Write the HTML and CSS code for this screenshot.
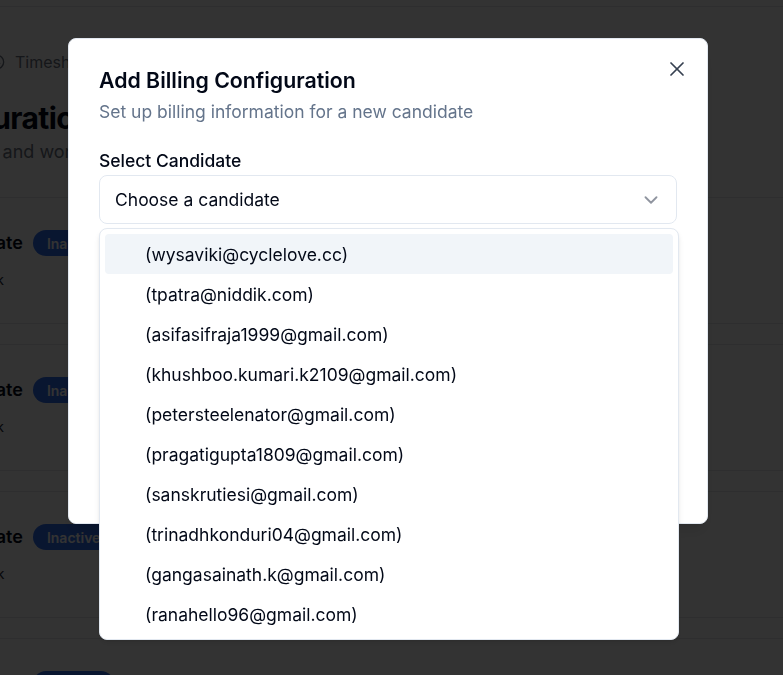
FILE: index.html
```html
<!DOCTYPE html>
<html lang="en">
<head>
<meta charset="utf-8">
<title>Billing Configuration</title>
<link rel="stylesheet" href="styles.css">
</head>
<body>
<div class="page">
  <div class="topbar"></div>
  <div class="content">
    <div class="crumb">
      <svg viewBox="0 0 24 24" fill="none" stroke="currentColor" stroke-width="2" stroke-linecap="round" stroke-linejoin="round"><circle cx="12" cy="12" r="10"/><path d="M12 6v6l4 2"/></svg>
      <span>Timesheets</span>
    </div>
    <h1 class="page-title">Billing Configuration</h1>
    <p class="lead">Manage billing rates and working hours</p>
    <div class="cards">
      <div class="card">
        <div class="card-head"><span class="card-title">Standard Billing Rate</span><span class="badge">Inactive</span></div>
        <div class="card-meta">$45.00/hr · 40 hrs/week</div>
      </div>
      <div class="card">
        <div class="card-head"><span class="card-title">Standard Billing Rate</span><span class="badge">Inactive</span></div>
        <div class="card-meta">$50.00/hr · 40 hrs/week</div>
      </div>
      <div class="card">
        <div class="card-head"><span class="card-title">Standard Billing Rate</span><span class="badge">Inactive</span></div>
        <div class="card-meta">$40.00/hr · 40 hrs/week</div>
      </div>
      <div class="card">
        <div class="card-head"><span class="card-title">Standard Billing Rate</span><span class="badge">Inactive</span></div>
        <div class="card-meta">$42.00/hr · 40 hrs/week</div>
      </div>
    </div>
  </div>
</div>

<div class="overlay"></div>

<div class="dialog" role="dialog">
  <h2 class="dialog-title">Add Billing Configuration</h2>
  <p class="dialog-desc">Set up billing information for a new candidate</p>
  <div class="field">
    <label class="label">Select Candidate</label>
    <div class="select">
      <span>Choose a candidate</span>
      <svg class="chevron" viewBox="0 0 24 24" fill="none" stroke="currentColor" stroke-width="2" stroke-linecap="round" stroke-linejoin="round"><path d="m6 9 6 6 6-6"/></svg>
    </div>
  </div>
  <div class="field">
    <label class="label">Hourly Rate</label>
    <div class="input">0.00</div>
  </div>
  <div class="field">
    <label class="label">Weekly Hours</label>
    <div class="input">40</div>
  </div>
  <div class="footer">
    <span class="btn btn-outline">Cancel</span>
    <span class="btn btn-primary">Create Configuration</span>
  </div>
  <svg class="close" viewBox="0 0 24 24" fill="none" stroke="currentColor" stroke-width="1.75" stroke-linecap="round" stroke-linejoin="round"><path d="M18 6 6 18"/><path d="m6 6 12 12"/></svg>
</div>

<div class="listbox" role="listbox">
  <div class="option active">(wysaviki@cyclelove.cc)</div>
  <div class="option">(tpatra@niddik.com)</div>
  <div class="option">(asifasifraja1999@gmail.com)</div>
  <div class="option">(khushboo.kumari.k2109@gmail.com)</div>
  <div class="option">(petersteelenator@gmail.com)</div>
  <div class="option">(pragatigupta1809@gmail.com)</div>
  <div class="option">(sanskrutiesi@gmail.com)</div>
  <div class="option">(trinadhkonduri04@gmail.com)</div>
  <div class="option">(gangasainath.k@gmail.com)</div>
  <div class="option">(ranahello96@gmail.com)</div>
</div>
</body>
</html>
```

FILE: styles.css
```css
* { box-sizing: border-box; }
html, body { margin: 0; height: 100%; }
body {
  font-family: Inter, "Noto Sans", sans-serif;
  background: #ffffff;
  color: #020817;
  overflow: hidden;
}

/* background page */
.page { width: 100%; }
.topbar { height: 7px; border-bottom: 1px solid #e5e7eb; }
.content { margin-left: -195px; width: 1200px; }
.crumb {
  display: flex;
  align-items: center;
  height: 36px;
  margin-top: 37px;
  margin-left: 184px;
  color: #6b7280;
  font-size: 16px;
}
.crumb svg { width: 16px; height: 16px; margin-right: 10px; flex: none; }
.page-title {
  margin: 20px 0 0;
  font-size: 30px;
  line-height: 36px;
  font-weight: 700;
  letter-spacing: -0.02em;
}
.lead { margin: 2px 0 0 21px; font-size: 18px; line-height: 28px; color: #6b7280; }
.cards { margin-top: 31px; display: flex; flex-direction: column; gap: 20px; }
.card {
  height: 127px;
  border: 1px solid #e5e7eb;
  border-radius: 8px;
  padding: 31px 24px 32px 37px;
}
.card-head { display: flex; align-items: center; gap: 10px; height: 28px; }
.card-title { font-size: 18px; font-weight: 600; line-height: 28px; }
.badge {
  display: flex;
  align-items: center;
  height: 26px;
  padding: 0 14px;
  border-radius: 13px;
  background: #2f6ef0;
  color: #ffffff;
  font-size: 14px;
  font-weight: 600;
}
.card-meta { margin-top: 13px; font-size: 14px; line-height: 20px; color: #1f2937; }

.overlay { position: fixed; inset: 0; background: rgba(0, 0, 0, 0.8); }

/* dialog */
.dialog {
  position: fixed;
  left: 68px;
  top: 38px;
  width: 640px;
  height: 486px;
  overflow: hidden;
  background: #ffffff;
  border: 1px solid #e2e8f0;
  border-radius: 8px;
  padding: 29px 30px 30px;
  box-shadow: 0 10px 15px -3px rgba(0,0,0,0.1), 0 4px 6px -4px rgba(0,0,0,0.1);
}
.dialog-title {
  margin: 0;
  font-size: 21.3px;
  line-height: 24px;
  font-weight: 600;
  color: #020817;
}
.dialog-desc { margin: 8px 0 0; font-size: 17.5px; line-height: 24px; color: #64748b; }
.field { margin-top: 25px; }
.label { display: block; font-size: 17.5px; line-height: 24px; font-weight: 500; color: #020817; }
.select, .input {
  margin-top: 2px;
  height: 49px;
  display: flex;
  align-items: center;
  justify-content: space-between;
  padding: 0 14px 0 15px;
  border: 1px solid #e2e8f0;
  border-radius: 8px;
  font-size: 17.5px;
  color: #020817;
}
.chevron { width: 22px; height: 22px; color: #6b7280; opacity: 0.75; }
.footer { margin-top: 24px; display: flex; justify-content: flex-end; gap: 8px; }
.btn { height: 40px; padding: 0 16px; display: flex; align-items: center; border-radius: 6px; font-size: 14px; font-weight: 500; }
.btn-outline { border: 1px solid #e2e8f0; }
.btn-primary { background: #0f172a; color: #fff; }
.close {
  position: absolute;
  top: 18px;
  right: 18px;
  width: 24px;
  height: 24px;
  color: #374151;
}

/* dropdown popover */
.listbox {
  position: fixed;
  left: 99px;
  top: 228px;
  width: 580px;
  padding: 5px;
  background: #ffffff;
  border: 1px solid #e2e8f0;
  border-radius: 8px;
  box-shadow: 0 4px 6px -1px rgba(0,0,0,0.1), 0 2px 4px -2px rgba(0,0,0,0.1);
}
.option {
  height: 40px;
  display: flex;
  align-items: center;
  padding-left: 40px;
  border-radius: 4px;
  font-size: 17.5px;
  color: #020817;
}
.option.active { background: #f1f5f9; }
```
